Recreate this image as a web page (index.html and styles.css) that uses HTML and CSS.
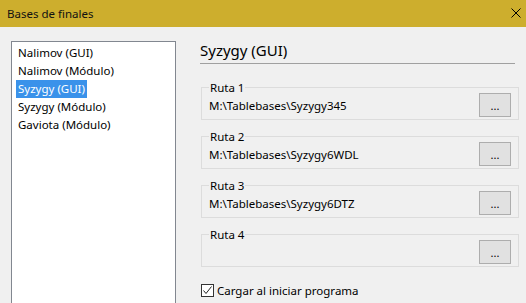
FILE: index.html
```html
<!DOCTYPE html>
<html lang="es">
<head>
<meta charset="utf-8">
<title>Bases de finales</title>
<link rel="stylesheet" href="styles.css">
</head>
<body>
<div class="window">
  <div class="titlebar">
    <span class="title">Bases de finales</span>
    <svg class="close" width="10" height="10" viewBox="0 0 10 10"><path d="M0.5 0.5 L9.5 9.5 M9.5 0.5 L0.5 9.5" stroke="#000" stroke-width="1"/></svg>
  </div>
  <div class="main">
    <ul class="list">
      <li><span class="item">Nalimov (GUI)</span></li>
      <li><span class="item">Nalimov (Módulo)</span></li>
      <li><span class="item selected">Syzygy (GUI)</span></li>
      <li><span class="item">Syzygy (Módulo)</span></li>
      <li><span class="item">Gaviota (Módulo)</span></li>
    </ul>
    <div class="panel">
      <h1 class="heading">Syzygy (GUI)</h1>
      <fieldset class="group">
        <legend>Ruta 1</legend>
        <div class="row"><span class="path">M:\Tablebases\Syzygy345</span><button class="browse">...</button></div>
      </fieldset>
      <fieldset class="group">
        <legend>Ruta 2</legend>
        <div class="row"><span class="path">M:\Tablebases\Syzygy6WDL</span><button class="browse">...</button></div>
      </fieldset>
      <fieldset class="group">
        <legend>Ruta 3</legend>
        <div class="row"><span class="path">M:\Tablebases\Syzygy6DTZ</span><button class="browse">...</button></div>
      </fieldset>
      <fieldset class="group">
        <legend>Ruta 4</legend>
        <div class="row"><span class="path"></span><button class="browse">...</button></div>
      </fieldset>
      <label class="check">
        <span class="box"><svg width="11" height="11" viewBox="0 0 11 11"><path d="M1.5 5.5 L4 8.5 L9.5 1.5" fill="none" stroke="#222" stroke-width="1"/></svg></span>
        <span>Cargar al iniciar programa</span>
      </label>
    </div>
  </div>
</div>
</body>
</html>
```
FILE: styles.css
```css
* { box-sizing: border-box; }
html, body { margin: 0; padding: 0; }
body {
  width: 526px;
  height: 303px;
  overflow: hidden;
  background: #f0f0f0;
  font-family: "Noto Sans", "Open Sans", sans-serif;
  font-size: 11.5px;
  color: #000;
}
.titlebar {
  height: 27px;
  background: #cdae2d;
  display: flex;
  align-items: center;
  justify-content: space-between;
  padding: 0 5px 0 7px;
}
.title { font-size: 11.5px; color: #111; }
.close { display: block; margin-top: -2px; }
.main {
  display: flex;
  height: 276px;
  padding: 13px 0 0 11px;
}
.list {
  list-style: none;
  margin: 1px 0 0 0;
  padding: 2px 0 0 4px;
  width: 165px;
  height: 262px;
  background: #fff;
  border: 1px solid #828790;
  border-bottom: 0;
  flex: none;
}
.list li { height: 18px; line-height: 18px; }
.item { display: inline-block; padding: 0 2px; }
.item.selected { background: #3a92ea; color: #fff; }
.panel {
  margin-left: 24px;
  width: 319px;
}
.heading {
  margin: 0;
  width: 315px;
  font-size: 15px;
  font-weight: normal;
  line-height: 20px;
  padding-bottom: 3px;
  border-bottom: 1px solid #a0a0a0;
  color: #000;
}
.group {
  margin: 16px 0 0 1px;
  padding: 0 7px 2px 7px;
  border: 1px solid #dcdcdc;
  min-width: 0;
}
.group + .group { margin-top: 9px; }
.group legend {
  padding: 0 1px;
  line-height: 14px;
  font-size: 11.5px;
  position: relative;
  top: 1px;
}
.row {
  display: flex;
  align-items: center;
  justify-content: space-between;
  margin-top: -1px;
}
.browse {
  width: 32px;
  height: 24px;
  background: #e1e1e1;
  border: 1px solid #adadad;
  font-family: inherit;
  font-size: 11px;
  padding: 0;
  color: #000;
}
.check {
  display: flex;
  align-items: center;
  gap: 3px;
  margin: 16px 0 0 1px;
}
.box {
  width: 13px;
  height: 13px;
  border: 1px solid #333;
  background: #fff;
  display: flex;
  align-items: center;
  justify-content: center;
}
.box svg { display: block; }
```
